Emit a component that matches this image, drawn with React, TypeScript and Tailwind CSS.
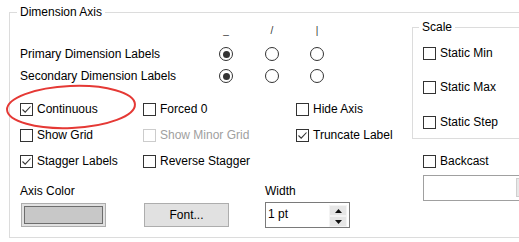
import React from 'react';

type BoxProps = { label: string; checked?: boolean; disabled?: boolean };

const Check = ({ label, checked, disabled }: BoxProps) => (
  <div className="flex items-center h-[14px]">
    <span
      className={`w-[13px] h-[13px] border bg-white flex items-center justify-center shrink-0 ${
        disabled ? 'border-[#cccccc]' : 'border-[#333333]'
      }`}
    >
      {checked && (
        <svg width="11" height="11" viewBox="0 0 11 11">
          <path d="M1.5 5.5 L4.2 8.2 L9.5 2.5" fill="none" stroke="#333" strokeWidth="1.1" />
        </svg>
      )}
    </span>
    <span className={`ml-[4px] whitespace-nowrap ${disabled ? 'text-[#a0a0a0]' : 'text-black'}`}>{label}</span>
  </div>
);

const Radio = ({ on }: { on?: boolean }) => (
  <span className="w-[14px] h-[14px] rounded-full border border-[#333333] bg-white flex items-center justify-center shrink-0">
    {on && <span className="w-[7px] h-[7px] rounded-full bg-[#333333]" />}
  </span>
);

const RadioRow = ({ label }: { label: string }) => (
  <div className="flex items-center h-[14px]">
    <span className="w-[199px] whitespace-nowrap">{label}</span>
    <Radio on />
    <span className="ml-[32px]">
      <Radio />
    </span>
    <span className="ml-[31px]">
      <Radio />
    </span>
  </div>
);

const Arrow = ({ up }: { up?: boolean }) => (
  <div className="h-[11px] bg-[#e6e6e6] border border-[#f4f4f4] flex items-center justify-center">
    <svg width="7" height="4" viewBox="0 0 7 4">
      <path d={up ? 'M0 4 L3.5 0 L7 4 Z' : 'M0 0 L3.5 4 L7 0 Z'} fill="#111" />
    </svg>
  </div>
);

export default function App() {
  return (
    <div
      className="relative w-[519px] h-[242px] overflow-hidden bg-white text-[12px] leading-[14px] text-black"
      style={{ fontFamily: '"Liberation Sans", Arial, sans-serif' }}
    >
      <fieldset className="ml-[9px] mt-[4px] w-[560px] border border-[#dcdcdc] pb-[9px]">
        <legend className="ml-[7px] px-[3px] leading-[16px]">Dimension Axis</legend>

        <div className="flex">
          {/* left side */}
          <div className="w-[402px] pl-[10px]">
            <div className="flex h-[12px] mt-[5px] text-[10px] leading-[12px] text-[#333]">
              <span className="ml-[199px] w-[14px] text-center">_</span>
              <span className="ml-[32px] w-[14px] text-center">/</span>
              <span className="ml-[31px] w-[14px] text-center">|</span>
            </div>

            <div className="mt-[10px]">
              <RadioRow label="Primary Dimension Labels" />
            </div>
            <div className="mt-[8px]">
              <RadioRow label="Secondary Dimension Labels" />
            </div>

            <div className="grid grid-cols-[123px_153px_auto] gap-y-[12px] mt-[19px]">
              <Check label="Continuous" checked />
              <Check label="Forced 0" />
              <Check label="Hide Axis" />
              <Check label="Show Grid" />
              <Check label="Show Minor Grid" disabled />
              <Check label="Truncate Label" checked />
              <Check label="Stagger Labels" checked />
              <Check label="Reverse Stagger" />
            </div>

            <div className="grid grid-cols-[124px_121px_auto] mt-[16px]">
              <span className="h-[14px]">Axis Color</span>
              <span />
              <span>Width</span>
            </div>

            <div className="grid grid-cols-[124px_121px_auto] items-start mt-[4px]">
              <div className="ml-[1px] mt-[1px] w-[85px] h-[24px] border border-[#adadad] bg-[#e1e1e1] p-[2px]">
                <div className="w-full h-full border border-[#6d6d6d] bg-[#c8c8c8]" />
              </div>
              <button className="mt-[1px] w-[85px] h-[24px] border border-[#adadad] bg-[#e1e1e1] text-[12px] leading-[14px]">
                Font...
              </button>
              <div className="w-[85px] h-[26px] border border-[#7a7a7a] bg-white flex">
                <span className="pl-[2px] pt-[4px]">1 pt</span>
                <div className="ml-auto mr-[2px] mt-[2px] w-[18px] flex flex-col">
                  <Arrow up />
                  <Arrow />
                </div>
              </div>
            </div>
          </div>

          {/* right side */}
          <div className="w-[150px]">
            <fieldset className="border border-[#dcdcdc] pb-[9px]">
              <legend className="ml-[6px] px-[3px] leading-[14px]">Scale</legend>
              <div className="pl-[10px]">
                <div className="mt-[12px]">
                  <Check label="Static Min" />
                </div>
                <div className="mt-[20px]">
                  <Check label="Static Max" />
                </div>
                <div className="mt-[21px]">
                  <Check label="Static Step" />
                </div>
              </div>
            </fieldset>

            <div className="pl-[11px] mt-[15px]">
              <Check label="Backcast" />
              <div className="mt-[7px] w-[130px] h-[26px] border border-[#a0a0a0] bg-white flex items-start">
                <div className="ml-[92px] mt-[2px] w-[20px] h-[19px] border border-[#cfcfcf] bg-[#e8e8e8]" />
              </div>
            </div>
          </div>
        </div>
      </fieldset>

      {/* red highlight */}
      <svg className="absolute left-0 top-0 pointer-events-none" width="519" height="242">
        <ellipse
          cx="71"
          cy="107"
          rx="64"
          ry="21"
          fill="none"
          stroke="#e53935"
          strokeWidth="2"
          transform="rotate(-2.5 71 107)"
        />
      </svg>
    </div>
  );
}
